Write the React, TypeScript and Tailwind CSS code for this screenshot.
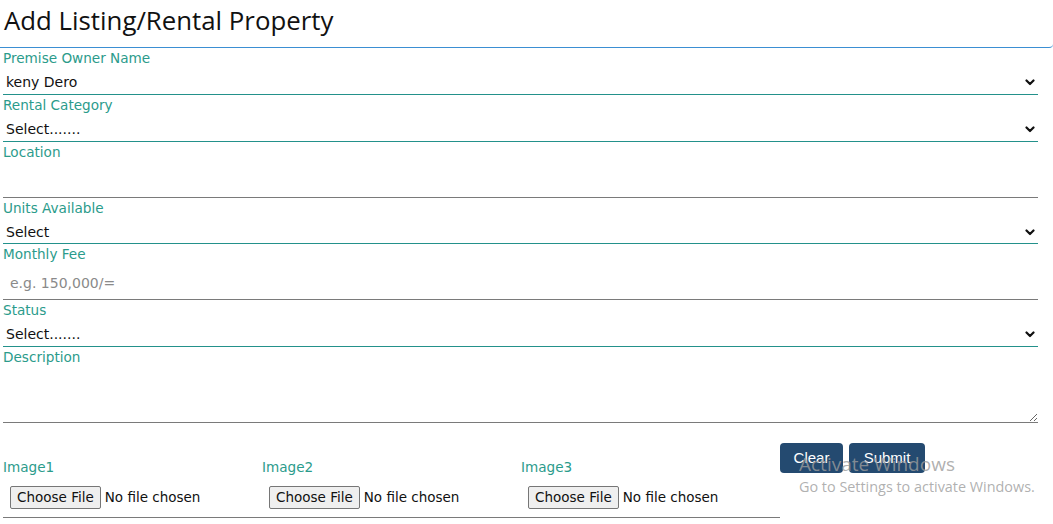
import { ChangeEvent, useState } from "react";

type Field =
  | { kind: "select"; label: string; options: string[]; h: string }
  | { kind: "input"; label: string; placeholder?: string };

const fields: Field[] = [
  { kind: "select", label: "Premise Owner Name", options: ["keny Dero"], h: "h-[28px]" },
  { kind: "select", label: "Rental Category", options: ["Select......."], h: "h-[28px]" },
  { kind: "input", label: "Location" },
  { kind: "select", label: "Units Available", options: ["Select"], h: "h-[27px]" },
  { kind: "input", label: "Monthly Fee", placeholder: "e.g. 150,000/=" },
  { kind: "select", label: "Status", options: ["Select......."], h: "h-[28px]" },
];

const labelCls =
  "block h-[19px] pt-[2px] text-[13.6px] leading-[16px] text-[#2b9b8b] font-['DejaVu_Sans',sans-serif]";

function Chevron() {
  return (
    <svg
      className="pointer-events-none absolute right-[3px] top-[12px]"
      width="10"
      height="7"
      viewBox="0 0 10 7"
      fill="none"
    >
      <path d="M1.5 1.5 5 5l3.5-3.5" stroke="#111" strokeWidth="2.2" strokeLinecap="round" strokeLinejoin="round" />
    </svg>
  );
}

function FilePick({ label }: { label: string }) {
  const [name, setName] = useState("No file chosen");
  const onChange = (e: ChangeEvent<HTMLInputElement>) => {
    const f = e.target.files?.[0];
    setName(f ? f.name : "No file chosen");
  };
  return (
    <div className="w-[259px]">
      <div className="text-[13.6px] leading-[17px] text-[#2b9b8b] font-['DejaVu_Sans',sans-serif]">{label}</div>
      <label className="mt-[10px] ml-[7px] flex items-center gap-[4px] text-[13.5px] font-['DejaVu_Sans',sans-serif] text-[#111] cursor-pointer">
        <span className="h-[23px] px-[6px] flex items-center border border-[#767676] rounded-[2px] bg-[#efefef]">
          Choose File
        </span>
        <span>{name}</span>
        <input type="file" className="hidden" onChange={onChange} />
      </label>
    </div>
  );
}

export default function App() {
  return (
    <div className="relative w-[1053px] h-[524px] overflow-hidden bg-white">
      <div className="h-[48px] border-b border-[#3b8fd3] rounded-br-[4px] pl-[4px] pt-[3px]">
        <h1 className="text-[25.8px] leading-[35px] text-[#111] font-['Open_Sans',sans-serif]">
          Add Listing/Rental Property
        </h1>
      </div>

      <form className="pl-[3px] pr-[15px]" onSubmit={(e) => e.preventDefault()}>
        {fields.map((f) =>
          f.kind === "select" ? (
            <div key={f.label}>
              <label className={labelCls}>{f.label}</label>
              <div className="relative">
                <select
                  className={`block w-full ${f.h} appearance-none border-b border-[#23918b] bg-white px-[3px] pt-[4px] text-[14px] text-[#111] font-['DejaVu_Sans',sans-serif] outline-none`}
                >
                  {f.options.map((o) => (
                    <option key={o}>{o}</option>
                  ))}
                </select>
                <Chevron />
              </div>
            </div>
          ) : (
            <div key={f.label}>
              <label className={labelCls}>{f.label}</label>
              <input
                className="block w-full h-[37px] border-b border-[#7a7a7a] px-[7px] pt-[4px] text-[14px] text-[#111] font-['DejaVu_Sans',sans-serif] placeholder:text-[#8a8a8a] outline-none"
                placeholder={f.placeholder}
              />
            </div>
          )
        )}
        <div>
          <label className={labelCls}>Description</label>
          <textarea className="block w-full h-[57px] border-b border-[#7a7a7a] px-[7px] text-[14px] font-['DejaVu_Sans',sans-serif] resize-y outline-none" />
        </div>

        <div className="mt-[20px] flex items-start">
          <div className="flex w-[777px] border-b border-[#7a7a7a] pt-[16px] pb-[8px]">
            <FilePick label="Image1" />
            <FilePick label="Image2" />
            <FilePick label="Image3" />
          </div>
          <div className="flex gap-[6px]">
            <button type="reset" className="h-[30px] w-[63px] rounded-[4px] bg-[#244a70] text-[15px] text-white font-['Liberation_Sans',sans-serif]">
              Clear
            </button>
            <button type="submit" className="h-[30px] w-[76px] rounded-[4px] bg-[#244a70] text-[15px] text-white font-['Liberation_Sans',sans-serif]">
              Submit
            </button>
          </div>
        </div>
      </form>

      <div className="pointer-events-none absolute left-[799px] top-[452px] text-[#9c9c9c]/80 font-['Open_Sans',sans-serif]">
        <div className="text-[19px] leading-[24px]">Activate Windows</div>
        <div className="text-[14.4px] leading-[20px] mt-[1px]">Go to Settings to activate Windows.</div>
      </div>
    </div>
  );
}
